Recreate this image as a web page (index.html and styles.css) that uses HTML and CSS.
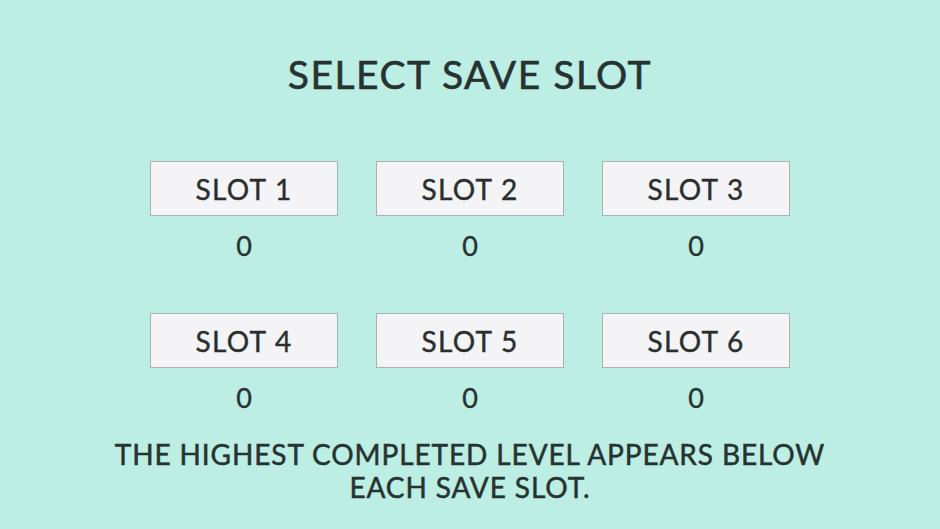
FILE: index.html
```html
<!DOCTYPE html>
<html lang="en">
<head>
    <meta charset="UTF-8">
    <meta name="viewport" content="width=device-width, initial-scale=1.0">
    <title>Select Save Slot</title>
    <link rel="stylesheet" href="styles.css">
</head>
<body>
    <div class="screen">
        <h1>SELECT SAVE SLOT</h1>
        <div class="slots">
            <div class="slot">
                <button class="slot-btn">SLOT 1</button>
                <p class="level">0</p>
            </div>
            <div class="slot">
                <button class="slot-btn">SLOT 2</button>
                <p class="level">0</p>
            </div>
            <div class="slot">
                <button class="slot-btn">SLOT 3</button>
                <p class="level">0</p>
            </div>
            <div class="slot">
                <button class="slot-btn">SLOT 4</button>
                <p class="level">0</p>
            </div>
            <div class="slot">
                <button class="slot-btn">SLOT 5</button>
                <p class="level">0</p>
            </div>
            <div class="slot">
                <button class="slot-btn">SLOT 6</button>
                <p class="level">0</p>
            </div>
        </div>
        <p class="note">THE HIGHEST COMPLETED LEVEL APPEARS BELOW<br>EACH SAVE SLOT.</p>
    </div>
</body>
</html>
```

FILE: styles.css
```css
body {
    font-family: Lato, "Open Sans", sans-serif;
    margin: 0;
    padding: 0;
    background-color: #bdeee4;
    color: #263331;
}
.screen {
    width: 940px;
    height: 529px;
    padding-top: 54px;
    box-sizing: border-box;
    text-align: center;
}
h1 {
    margin: 0;
    font-size: 39px;
    line-height: 40px;
    font-weight: 400;
    letter-spacing: 1.5px;
    -webkit-text-stroke: 0.6px #263331;
}
.slots {
    display: grid;
    grid-template-columns: repeat(3, 188px);
    column-gap: 38px;
    row-gap: 37px;
    justify-content: center;
    margin-top: 67px;
}
.slot-btn {
    display: block;
    width: 188px;
    height: 55px;
    margin: 0;
    padding: 0;
    background: #f4f4f6;
    border: 1px solid #a9b3b1;
    font-family: inherit;
    font-size: 28px;
    font-weight: 400;
    letter-spacing: 1.3px;
    color: #2a2f2e;
    -webkit-text-stroke: 0.4px #2a2f2e;
}
.level {
    margin: 0;
    height: 60px;
    line-height: 60px;
    font-size: 27px;
    font-weight: 400;
    -webkit-text-stroke: 0.4px #263331;
}
.note {
    margin: 10px 0 0;
    font-size: 28px;
    line-height: 33px;
    font-weight: 400;
    letter-spacing: 0.9px;
    -webkit-text-stroke: 0.5px #263331;
}
```
